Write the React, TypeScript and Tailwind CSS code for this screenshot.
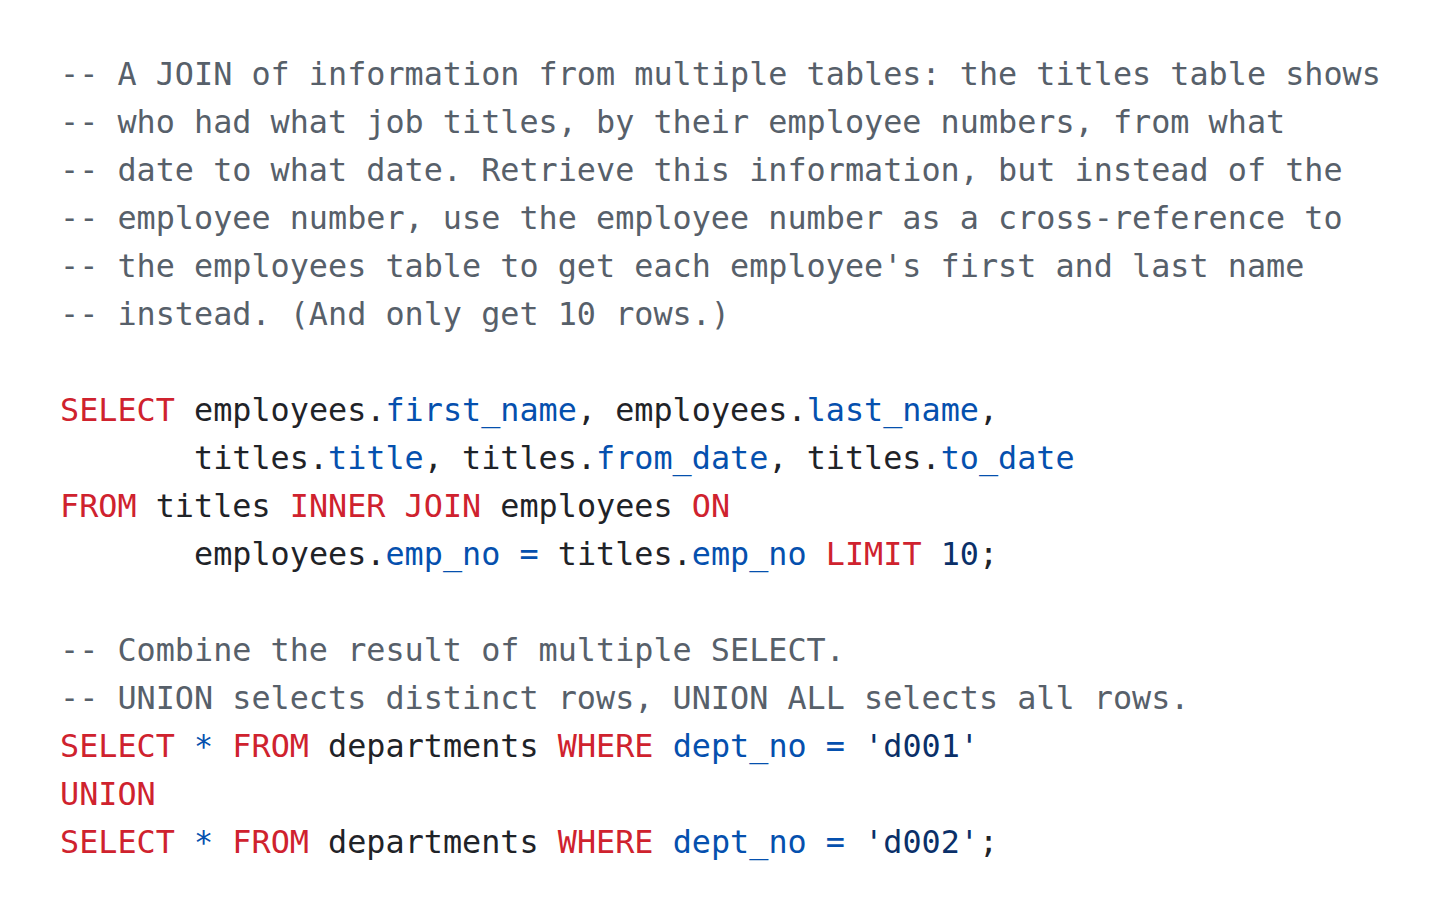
import React from "react";

const K = ({ children }: { children: React.ReactNode }) => <span className="text-[#cf222e]">{children}</span>;
const C = ({ children }: { children: React.ReactNode }) => <span className="text-[#0550ae]">{children}</span>;
const S = ({ children }: { children: React.ReactNode }) => <span className="text-[#0a3069]">{children}</span>;
const M = ({ children }: { children: React.ReactNode }) => <span className="text-[#57606a]">{children}</span>;

export default function App() {
  return (
    <div className="min-h-[918px] w-full bg-white">
      <pre
        className="pl-[60px] pt-[50px] text-[31.8px] leading-[48px] text-[#1f2328]"
        style={{ fontFamily: '"DejaVu Sans Mono", "Liberation Mono", monospace' }}
      >
        <M>-- A JOIN of information from multiple tables: the titles table shows</M>
        {"\n"}
        <M>-- who had what job titles, by their employee numbers, from what</M>
        {"\n"}
        <M>-- date to what date. Retrieve this information, but instead of the</M>
        {"\n"}
        <M>-- employee number, use the employee number as a cross-reference to</M>
        {"\n"}
        <M>-- the employees table to get each employee's first and last name</M>
        {"\n"}
        <M>-- instead. (And only get 10 rows.)</M>
        {"\n\n"}
        <K>SELECT</K> employees.<C>first_name</C>, employees.<C>last_name</C>,
        {"\n"}
        {"       "}titles.<C>title</C>, titles.<C>from_date</C>, titles.<C>to_date</C>
        {"\n"}
        <K>FROM</K> titles <K>INNER JOIN</K> employees <K>ON</K>
        {"\n"}
        {"       "}employees.<C>emp_no</C> <C>=</C> titles.<C>emp_no</C> <K>LIMIT</K> <S>10</S>;
        {"\n\n"}
        <M>-- Combine the result of multiple SELECT.</M>
        {"\n"}
        <M>-- UNION selects distinct rows, UNION ALL selects all rows.</M>
        {"\n"}
        <K>SELECT</K> <C>*</C> <K>FROM</K> departments <K>WHERE</K> <C>dept_no</C> <C>=</C> <S>'d001'</S>
        {"\n"}
        <K>UNION</K>
        {"\n"}
        <K>SELECT</K> <C>*</C> <K>FROM</K> departments <K>WHERE</K> <C>dept_no</C> <C>=</C> <S>'d002'</S>;
      </pre>
    </div>
  );
}
